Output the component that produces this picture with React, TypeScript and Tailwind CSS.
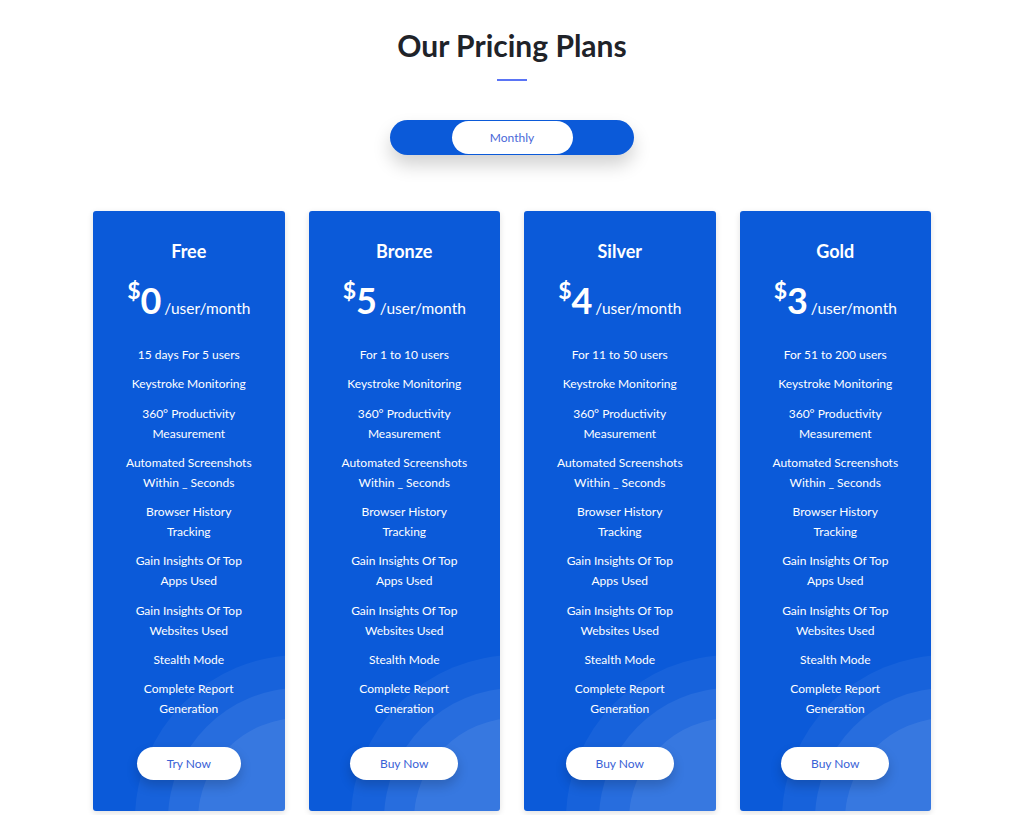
import React from "react";

const features = (first: string) => [
  [first],
  ["Keystroke Monitoring"],
  ["360° Productivity", "Measurement"],
  ["Automated Screenshots", "Within _ Seconds"],
  ["Browser History", "Tracking"],
  ["Gain Insights Of Top", "Apps Used"],
  ["Gain Insights Of Top", "Websites Used"],
  ["Stealth Mode"],
  ["Complete Report", "Generation"],
];

const plans = [
  { name: "Free", price: "0", first: "15 days For 5 users", btn: "Try Now", bw: "w-[104px]" },
  { name: "Bronze", price: "5", first: "For 1 to 10 users", btn: "Buy Now", bw: "w-[108px]" },
  { name: "Silver", price: "4", first: "For 11 to 50 users", btn: "Buy Now", bw: "w-[108px]" },
  { name: "Gold", price: "3", first: "For 51 to 200 users", btn: "Buy Now", bw: "w-[108px]" },
];

function Card({ p }: { p: (typeof plans)[number] }) {
  return (
    <div className="relative w-[191.5px] h-[600px] rounded-[3px] bg-[#0b5ad9] overflow-hidden shadow-[0_2px_6px_rgba(0,0,0,0.12)] text-white">
      <div className="absolute left-[42px] top-[444px] w-[330px] h-[330px] rounded-full bg-white/[0.05]" />
      <div className="absolute left-[75px] top-[477px] w-[264px] h-[264px] rounded-full bg-white/[0.07]" />
      <div className="absolute left-[105px] top-[507px] w-[204px] h-[204px] rounded-full bg-white/[0.08]" />
      <div className="relative flex flex-col items-center pt-[29px]">
        <div className="text-[18px] leading-[22px] font-bold">{p.name}</div>
        <div className="mt-[17px] flex items-baseline h-[42px]">
          <span className="text-[23px] leading-none font-bold self-start mt-[0px]">$</span>
          <span className="text-[36px] leading-[42px] font-bold">{p.price}</span>
          <span className="text-[15.5px] ml-[3px]">/user/month</span>
        </div>
        <div className="mt-[24px] flex flex-col gap-[9.3px] text-[12px] leading-[20px] text-center">
          {features(p.first).map((f, i) => (
            <div key={i}>
              {f.map((l, j) => (
                <div key={j}>{l}</div>
              ))}
            </div>
          ))}
        </div>
        <button
          className={`mt-[28px] ${p.bw} h-[33px] rounded-full bg-white text-[#3a62d6] text-[12px] shadow-[0_6px_12px_rgba(0,0,0,0.18)]`}
        >
          {p.btn}
        </button>
      </div>
    </div>
  );
}

export default function App() {
  return (
    <div className="w-[1024px] h-[815px] overflow-hidden bg-white font-['Lato','Noto_Sans',sans-serif]">
      <div className="flex flex-col items-center pt-[27px]">
        <h1 className="text-[30px] leading-[36px] font-bold text-[#1f2329]">Our Pricing Plans</h1>
        <div className="mt-[16px] w-[30px] h-[2px] bg-[#5a74f5]" />
        <div className="mt-[39px] w-[244px] h-[35px] rounded-full bg-[#0b5ad9] flex items-center justify-center shadow-[0_10px_18px_rgba(0,0,0,0.18)]">
          <div className="w-[121px] h-[33px] rounded-full bg-white flex items-center justify-center text-[12px] text-[#4a68d8]">
            Monthly
          </div>
        </div>
        <div className="mt-[56px] flex gap-[24px]">
          {plans.map((p) => (
            <Card key={p.name} p={p} />
          ))}
        </div>
      </div>
    </div>
  );
}
